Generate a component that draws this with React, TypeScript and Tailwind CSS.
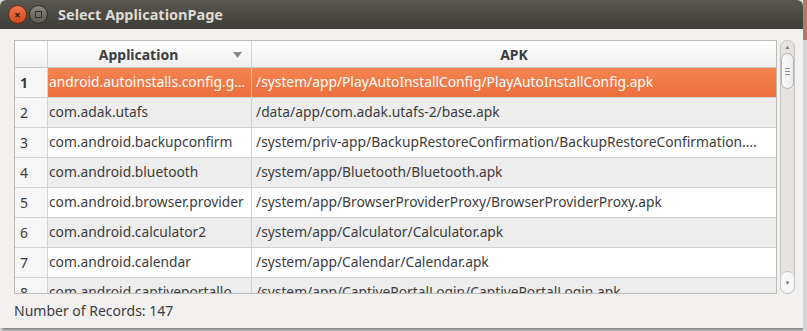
const records = [
  { app: 'android.autoinstalls.config.google.nexus', apk: '/system/app/PlayAutoInstallConfig/PlayAutoInstallConfig.apk' },
  { app: 'com.adak.utafs', apk: '/data/app/com.adak.utafs-2/base.apk' },
  { app: 'com.android.backupconfirm', apk: '/system/priv-app/BackupRestoreConfirmation/BackupRestoreConfirmation.apk' },
  { app: 'com.android.bluetooth', apk: '/system/app/Bluetooth/Bluetooth.apk' },
  { app: 'com.android.browser.provider', apk: '/system/app/BrowserProviderProxy/BrowserProviderProxy.apk' },
  { app: 'com.android.calculator2', apk: '/system/app/Calculator/Calculator.apk' },
  { app: 'com.android.calendar', apk: '/system/app/Calendar/Calendar.apk' },
  { app: 'com.android.captiveportallogin', apk: '/system/app/CaptivePortalLogin/CaptivePortalLogin.apk' },
]

const selected = 0

function TitleBar() {
  return (
    <div className="flex h-[29px] items-center rounded-t-[6px] bg-gradient-to-b from-[#5b5851] to-[#3d3c37] pl-[8px]">
      <div className="flex h-[19px] w-[19px] items-center justify-center rounded-full border border-[#6b2a14] bg-gradient-to-b from-[#f2764a] to-[#d2471c] text-[11px] leading-none font-bold text-[#3a1a0c]">
        ×
      </div>
      <div className="ml-[2px] flex h-[19px] w-[19px] items-center justify-center rounded-full border border-[#2e2d2a] bg-gradient-to-b from-[#8a877f] to-[#5f5c56]">
        <div className="h-[7px] w-[7px] border border-[#2f2e2b]" />
      </div>
      <span className="ml-[10px] text-[14.5px] font-bold text-[#dfdbd2]">Select ApplicationPage</span>
    </div>
  )
}

function Scrollbar() {
  return (
    <div className="ml-[3px] flex w-[15px] flex-col rounded-[7px] border border-[#c6c3bf] bg-[#e4e3e1]">
      <div className="flex h-[12px] items-center justify-center text-[6px] leading-none text-[#7a7a7a]">▲</div>
      <div className="flex h-[36px] flex-col items-center justify-center gap-[2px] rounded-[7px] border border-[#b7b4b0] bg-gradient-to-r from-[#fbfbfb] to-[#ececec]">
        <div className="h-px w-[5px] bg-[#8d8d8d]" />
        <div className="h-px w-[5px] bg-[#8d8d8d]" />
        <div className="h-px w-[5px] bg-[#8d8d8d]" />
      </div>
      <div className="flex-1" />
      <div className="flex h-[22px] items-center justify-center rounded-[7px] border-t border-[#c6c3bf] bg-[#f7f7f7] text-[6px] leading-none text-[#7a7a7a]">▼</div>
    </div>
  )
}

function RecordsTable() {
  return (
    <div className="flex h-[254px] w-[763px] flex-col overflow-hidden border border-[#bfbcb7] bg-white">
      <div className="flex h-[27px] shrink-0 border-b border-[#c9c6c2] bg-gradient-to-b from-[#ffffff] to-[#efefef] text-[14px] font-bold text-[#3c3c3c]">
        <div className="w-[33px] shrink-0 border-r border-[#d6d3cf]" />
        <div className="relative flex w-[204px] shrink-0 items-center justify-center border-r border-[#d6d3cf] pr-[22px]">
          Application
          <svg className="absolute right-[9px] top-[11px] h-[6px] w-[9px]" viewBox="0 0 9 6">
            <polygon points="0,0 9,0 4.5,6" fill="#8a8a8a" />
          </svg>
        </div>
        <div className="flex flex-1 items-center justify-center">APK</div>
      </div>
      {records.map((r, i) => {
        const isSel = i === selected
        const rowBg = isSel
          ? 'bg-gradient-to-b from-[#f5844f] to-[#ec6f3e] text-white'
          : i % 2 === 1
            ? 'bg-[#ededed] text-[#3c3c3c]'
            : 'bg-white text-[#3c3c3c]'
        return (
          <div key={r.app} className="flex h-[30px] shrink-0 border-b border-[#d0d0d0] text-[13.8px]">
            <div
              className={`flex w-[33px] shrink-0 items-center border-r border-[#d6d3cf] bg-[#f6f6f6] pl-[5px] text-[14px] text-[#3c3c3c] ${isSel ? 'font-bold' : ''}`}
            >
              {i + 1}
            </div>
            <div className={`flex min-w-0 flex-1 ${rowBg}`}>
              <div className="flex w-[204px] shrink-0 items-center border-r border-[#d0d0d0] pl-[1px] pr-[1px]">
                <span className="truncate">{r.app}</span>
              </div>
              <div className="flex min-w-0 flex-1 items-center pl-[4px] pr-[13px]">
                <span className="truncate">{r.apk}</span>
              </div>
            </div>
          </div>
        )
      })}
    </div>
  )
}

export default function App() {
  return (
    <div className="flex h-[331px] w-[807px] bg-[#dcdcdc]" style={{ fontFamily: '"Noto Sans", sans-serif' }}>
      <div className="flex h-[328px] w-[803px] flex-col shadow-[2px_2px_3px_rgba(0,0,0,0.45)]">
        <TitleBar />
        <div className="flex flex-1 flex-col bg-[#f2f1f0] pl-[14px] pt-[11px]">
          <div className="flex">
            <RecordsTable />
            <Scrollbar />
          </div>
          <div className="mt-[6px] text-[14px] text-[#3c3c3c]">Number of Records: 147</div>
        </div>
      </div>
      <div className="flex flex-1 flex-col">
        <div className="h-[40px] bg-[#b9785f]" />
        <div className="flex-1 bg-[#d4d4d4]" />
      </div>
    </div>
  )
}
